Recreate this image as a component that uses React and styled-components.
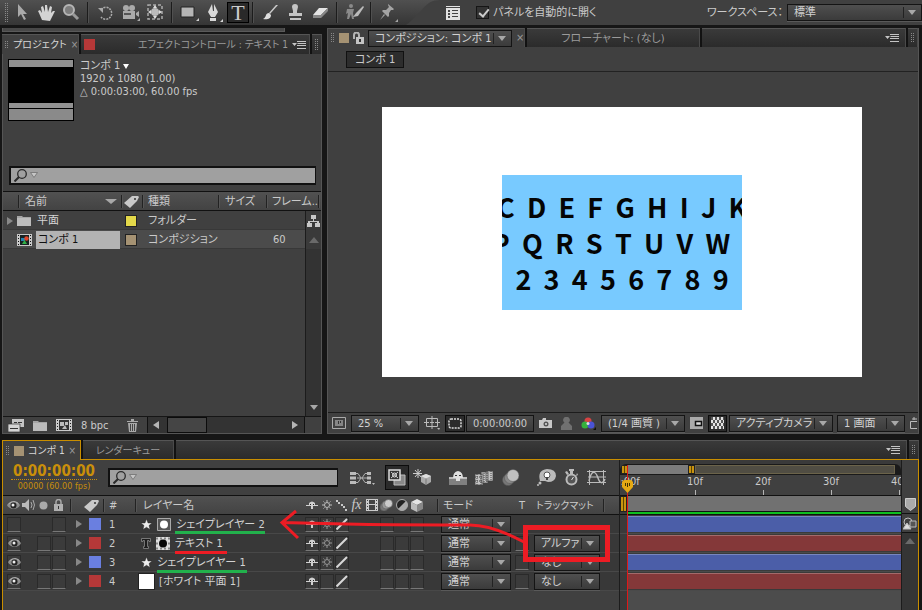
import React from 'react'
import styled, { createGlobalStyle } from 'styled-components'

const layers = [
	{ id: 1, name: 'シェイプレイヤー 2', color: '#6a7fe0', bar: '#4b5ea8', kind: 'star', mask: 'maskLight', visible: false, sun: true, matte: null, t: false },
	{ id: 2, name: 'テキスト 1', color: '#b53838', bar: '#843839', kind: 'type', mask: 'maskDark', visible: true, sun: true, matte: 'アルファ', t: true },
	{ id: 3, name: 'シェイプレイヤー 1', color: '#6a7fe0', bar: '#4b5ea8', kind: 'star', visible: true, sun: true, matte: 'なし', t: true },
	{ id: 4, name: '[ホワイト 平面 1]', color: '#b53838', bar: '#843839', kind: 'solid', visible: true, sun: false, matte: 'なし', t: true },
]

const glyphRows = [
	{ text: 'C D E F G H I J K', shift: 0 },
	{ text: 'P Q R S T U V W', shift: 22 },
	{ text: '2 3 4 5 6 7 8 9', shift: 0 },
]

// every drawing is [width, height, shapes]
const icons = {
	arrow: [12, 17, <path d="M2 0v13l3-3 3 6 2-1-3-5h4z" fill="#a9a9a9" />],
	hand: [17, 17, <path d="M4 16 1 9 0 7l2-1 2 3L3 3l2-1 2 6V1h2l1 7 2-6 2 1-1 6 2-2 2 0-3 6-2 4z" fill="#d4d4d4" />],
	zoom: [17, 17, <g fill="none"><circle cx="6" cy="6" r="5" fill="#7d7d7d" stroke="#b5b5b5" strokeWidth="2" /><path d="m10 10 5 5" stroke="#999" strokeWidth="3" /></g>],
	rotate: [16, 16, <g><path d="M3 4.500A6 6 0 1 1 3 12" fill="none" stroke="#aaa" strokeWidth="1.500" strokeDasharray="2 1" /><path d="M0 3h5v5z" fill="#aaa" /></g>],
	movie: [18, 17, <g fill="#aaa"><circle cx="4" cy="4" r="3" /><circle cx="10" cy="4" r="3" /><path d="M1 7h12v8H1zm13 2 3-2v6l-3-2zM15 17h3v-3z" /><path d="M2 9h7v2H2z" fill="#555" /></g>],
	behind: [17, 17, <g><path d="M1 1h14v14H1z" fill="none" stroke="#aaa" strokeWidth="1.500" strokeDasharray="3 2" /><circle cx="8" cy="8" r="4" fill="#bbb" /><path d="m8 1 2 3H6zm0 14 2-3H6zM1 8l3-2v4zm14 0-3-2v4z" fill="#ddd" /></g>],
	rect: [19, 17, <g><path d="M1 3h13v10H1z" fill="#b5b5b5" stroke="#222" /><path d="M19 17h-3l3-3z" fill="#ccc" /></g>],
	pen: [17, 18, <g fill="#d8d8d8"><path d="M6 0 2 8l3 5h4l3-5-4-8v7H7zM4 14h6v3H4z" /><path d="M17 18h-3l3-3z" /></g>],
	brush: [17, 16, <g><path d="M16 0 8 9 7 8 14 0z" fill="#ccc" /><path d="M7 8c-4 0-2 4-6 6 4 1 8 0 8-4z" fill="#ddd" /></g>],
	stamp: [15, 17, <path d="M7 0a3 3 0 0 1 3 3L9 7v2h5v3H1V9h4V7L4 3a3 3 0 0 1 3-3zM2 14h11v2H2z" fill="#c4c4c4" />],
	eraser: [17, 12, <g><path d="M7 1h9l-7 7H1z" fill="#e4e4e4" /><path d="M1 8h8v3H1zm8 0 7-7v3l-7 7z" fill="#888" /></g>],
	puppet: [18, 17, <g fill="#8a8a8a"><circle cx="5" cy="2" r="2" /><path d="M1 5h7l-1 4 1 6H6l-1-5-2 5H1l1-6-2 1z" /><path d="m17 2-7 7-3 4 5-1 6-9z" fill="#bbb" /></g>],
	pin: [18, 18, <g fill="#a4a4a4"><path d="m8 0 6 5-1 1-2 0-2 3 0 3-1 1-6-6 1-1 3 0 3-3-1-2zM4 10l1 1-5 5zM18 18h-3l3-3z" /></g>],
	panel: [14, 14, <g><path d="M0 0h14v14H0z" fill="#e2e2e2" /><path d="M2 4h2v2H2zm4 0h6v1H6zM2 7h2v2H2zm4 0h6v1H6zM2 10h2v2H2zm4 0h6v1H6zM0 1h14v1H0z" fill="#444" /></g>],
	menu: [14, 8, <path d="M0 2h5L2.500 5zM5 0h9v1H5zm0 2h9v1H6zm0 2h9v1H5zm0 3h9v1H5z" fill="#c4c4c4" />],
	lock: [11, 12, <g><path d="M1 7V3a2.500 2.500 0 0 1 5 0v3" fill="none" stroke="#b4b4b4" strokeWidth="2" /><path d="M3 5h8v7H3z" fill="#c4c4c4" /><path d="M6 7h2v3H6z" fill="#333" /></g>],
	padlock: [9, 12, <g><path d="M2 6V3a2.500 2.500 0 0 1 5 0v3" fill="none" stroke="#a8a8a8" strokeWidth="1.500" /><path d="M0 5h9v7H0z" fill="#b0b0b0" /><path d="M4 7h1v3H4z" fill="#333" /></g>],
	lens: [24, 13, <g><circle cx="8" cy="5" r="4.300" fill="none" stroke="#2a2a2a" strokeWidth="1.300" /><path d="m5 8-4.500 4.500" stroke="#2a2a2a" strokeWidth="2" /><path d="M16.500 3.500h7L20 8.500z" fill="#c6c6c6" stroke="#6e6e6e" strokeWidth=".8" /></g>],
	tag: [15, 13, <g><path d="M0 8 8 1l6 0 1 1-2 4-7 7z" fill="#c9c9c9" /><circle cx="11" cy="4" r="1" fill="#333" /></g>],
	folder: [14, 11, <g><path d="M0 1h5l1 1h8v9H0z" fill="#a5a5a5" /><path d="M0 3h14v8H0z" fill="#bcbcbc" /></g>],
	comp: [15, 12, <g><path d="M0 0h15v12H0z" fill="#c8c8c8" /><path d="M3 1h9v10H3z" fill="#172222" /><path d="M1 1h1v1H1zm0 3h1v1H1zm0 3h1v1H1zm0 3h1v1H1zm12-9h1v1h-1zm0 3h1v1h-1zm0 3h1v1h-1zm0 3h1v1h-1z" fill="#111" /><path d="M4 4h4v3H4z" fill="#2482b0" /><circle cx="9.500" cy="4.500" r="2.200" fill="#e0452a" /><path d="m5 10 2.500-4L10 10z" fill="#31b046" /></g>],
	compGrey: [16, 12, <g><path d="M0 0h16v12H0z" fill="#ccc" /><path d="M3 1h10v10H3z" fill="#333" /><path d="M1 1h1v1H1zm0 3h1v1H1zm0 3h1v1H1zm0 3h1v1H1zm13-9h1v1h-1zm0 3h1v1h-1zm0 3h1v1h-1zm0 3h1v1h-1z" fill="#222" /><path d="M4 3h4v4H4zm5 0h3v3H9zm-3 7 3-4 2 4z" fill="#bbb" /></g>],
	footage: [16, 13, <g fill="#c4c4c4"><path d="M4 0h12v8H4z" /><path d="M0 5h12v8H0z" fill="#d4d4d4" stroke="#333" strokeWidth=".7" /><path d="M6 3h3v1H6zm4 0h4v1h-4zM2 9h8v1H2z" fill="#333" /></g>],
	trash: [11, 13, <g><path d="M0 2h11v1H0zM4 0h3v2H4zM1 4h9l-1 9H2z" fill="#aaa" /><path d="M3.500 5v7m2-7v7m2-7v7" stroke="#444" /></g>],
	tree: [13, 12, <path d="M4 0h5v4H7v2h5v2h1v4H8V8h2V7H3v1h2v4H0V8h1V6h5V4H4z" fill="#c8c8c8" />],
	view: [14, 12, <g><path d="M.5.500h13v11H.5z" fill="none" stroke="#aaa" /><path d="M3 3h8v6H3z" fill="#858585" /><path d="M6 4h1v3H6zm2 0h1v2H8z" fill="#333" /></g>],
	safe: [16, 14, <g fill="none" stroke="#bbb"><path d="M2.500 2.500h11v8h-11zM8 0v5m0 3v5M0 6.500h5m6 0h5M8 5v3M6 6.500h4" /><path d="M13 12h3l-1 2z" fill="#bbb" stroke="none" /></g>],
	region: [14, 11, <rect x="1" y="1" width="12" height="9" rx="2" fill="none" stroke="#ddd" strokeWidth="1.500" strokeDasharray="2 1" />],
	photo: [13, 10, <g><path d="M0 2h3l1-2h3v2h6v8H0z" fill="#c8c8c8" /><circle cx="7" cy="6" r="2.500" fill="#555" /><circle cx="7" cy="6" r="1" fill="#ddd" /></g>],
	person: [11, 13, <path d="M5.500 0a3 3 0 0 1 2 5.500L11 9v4H0V9l3.500-3.500A3 3 0 0 1 5.500 0z" fill="#707070" />],
	rgb: [15, 13, <g><circle cx="7" cy="4" r="3.500" fill="#d84343" /><circle cx="4" cy="8" r="3.500" fill="#35b13c" /><circle cx="10" cy="8" r="3.500" fill="#4a53d6" /><circle cx="7" cy="6.500" r="1.500" fill="#ddd" /><path d="M15 13h-3l3-3z" fill="#111" /></g>],
	pixel: [13, 12, <g><path d="M0 0h13v12H0z" fill="#aaa" /><path d="M5.500 4.500h6v4h-6z" fill="#ddd" stroke="#111" strokeWidth="1.500" /></g>],
	checker: [13, 12, <g><path d="M0 0h13v12H0z" fill="#e4e4e4" /><path d="M0 1.500h13M0 7.500h13" stroke="#555" strokeWidth="3" strokeDasharray="2 2" /><path d="M2 4.500h11M2 10.500h11" stroke="#555" strokeWidth="3" strokeDasharray="2 2" /></g>],
	export: [8, 12, <g fill="none" stroke="#bbb"><path d="M1.500 4.500h7v7h-7zM5 0v3M3 2h6" /></g>],
	eye: [13, 9, <g><path d="M0 4.500C3 0 10 0 13 4.500 10 9 3 9 0 4.500z" fill="#8d8d8d" /><path d="M1 3.500C4-.5 10 0 12 3.500" fill="none" stroke="#ccc" /><circle cx="6.500" cy="4.500" r="3" fill="#222" /><circle cx="6" cy="4" r="1.500" fill="#eee" /></g>],
	sound: [14, 12, <g><path d="M0 4h3l4-4v12L3 8H0z" fill="#bbb" /><path d="M9 3q2 3 0 6m2-8q3 5 0 10" fill="none" stroke="#aaa" /></g>],
	solo: [9, 9, <circle cx="4.500" cy="4.500" r="4" fill="#aaa" />],
	shy: [12, 8, <g fill="#d0d0d0"><path d="M0 4h3v1H0zm9 0h3v1H9z" /><path d="M3 2q3-3 6 0v3H7v3H5V5H3z" /><path d="M4 3h1v1H4zm3 0h1v1H7z" fill="#222" /></g>],
	sun: [10, 10, <g fill="none" stroke="#c0c0c0"><circle cx="5" cy="5" r="2.500" /><path d="M5 0v2m0 6v2M0 5h2m6 0h2M1.500 1.500l1 1m5 5 1 1m0-7-1 1m-5 5-1 1" /></g>],
	quality: [11, 11, <path d="M0 0h2v2H0zm2 2h2v2H2zm3 2h2v2H5zm2 2h2v2H7zm2 3h2v2H9z" fill="#c8c8c8" />],
	slash: [12, 12, <path d="M.5 11.500 11 1" stroke="#d8d8d8" strokeWidth="2" />],
	film: [12, 12, <g><path d="M0 0h12v12H0z" fill="#ccc" /><path d="M3 1h6v4H3zm0 5h6v5H3zM1 1h1v1H1zm0 3h1v1H1zm0 3h1v1H1zm0 3h1v1H1zm9-9h1v1h-1zm0 3h1v1h-1zm0 3h1v1h-1zm0 3h1v1h-1z" fill="#444" /></g>],
	blur: [13, 12, <g stroke="#555" strokeWidth=".5"><circle cx="4" cy="8" r="4" fill="#777" /><circle cx="6" cy="6" r="4" fill="#999" /><circle cx="8.500" cy="4.500" r="4" fill="#ccc" /></g>],
	adjust: [12, 12, <g><circle cx="6" cy="6" r="5.500" fill="#222" stroke="#aaa" /><path d="M10 2A5.500 5.500 0 0 1 2 10z" fill="#aaa" /></g>],
	cube: [12, 13, <g><path d="m6 0 6 3-6 3-6-3z" fill="#e4e4e4" /><path d="m0 3 6 3v7l-6-3z" fill="#bbb" /><path d="m12 3-6 3v7l6-3z" fill="#888" /></g>],
	star: [11, 11, <path d="m5.500 0 1.500 4h4L8 6.500l1 4-3.500-2.300L2 10.500l1-4L0 4h4z" fill="#eee" stroke="#222" strokeWidth=".4" />],
	type: [10, 11, <path d="M.5.500h9v3H8V2.500H6.500v6h1v2h-5v-2h1v-6H2v1H.5z" fill="#1e1e1e" stroke="#8a8a8a" strokeWidth=".8" />],
	maskLight: [14, 13, <g><path d="M.5.500h13v12H.5z" fill="#555" stroke="#aaa" /><circle cx="7" cy="6.500" r="4" fill="#fff" /></g>],
	maskDark: [14, 13, <g><path d="M0 0h14v13H0z" fill="#ddd" /><path d="M0 1.500h14M0 6.500h14M0 11.500h14" stroke="#888" strokeWidth="2" strokeDasharray="2 2" /><circle cx="7" cy="6.500" r="4" fill="#080808" /></g>],
	flow: [25, 14, <g fill="none" stroke="#b0b0b0"><path d="M6 2.500h2l3 4.500-3 4.500H6M18 2.500h-3L12 7l3 4.500h3M7 7h10" /><path d="M0 1h6v3H0zm0 4.500h6v3H0zM0 10h6v3H0zM17 1h4v3h-4zm0 4.500h4v3h-4zm0 4.500h4v3h-4z" fill="#bbb" stroke="none" /><path d="M22 12h3l-1.500 2z" fill="#bbb" stroke="none" /></g>],
	live: [18, 17, <g><path d="M6 6h11v10H6z" fill="#888" stroke="#bbb" /><path d="M1 1h11v10H1z" fill="#333" stroke="#ddd" strokeWidth="1.500" /><path d="M3 3l7 6m0-6L3 9" stroke="#ccc" /><circle cx="6.500" cy="6" r="2" fill="none" stroke="#ddd" /></g>],
	draft: [19, 17, <g><path d="m13 5 5 2v6l-5 3-5-3V7z" fill="#aaa" /><path d="m8 7 5 2.500L18 7l-5-2z" fill="#ddd" /><path d="M13 9.500V16" stroke="#777" /><path d="M5 0v9M0 4.500h9M2 1l6 7m0-7L2 8" stroke="#ccc" /></g>],
	hide: [18, 14, <g><path d="M0 6h18v8H0z" fill="#808080" /><path d="M0 6h18v2H0z" fill="#bbb" /><path d="M4 7q0-6 5-7 5 1 5 7l-3 0v3H7V7z" fill="#e0e0e0" /><path d="M6 4h2v1H6zm4 0h2v1h-2z" fill="#333" /></g>],
	frames: [19, 15, <g fill="#c4c4c4" stroke="#444" strokeWidth=".7"><path d="M11 1h7v10h-7zM6 2h7v11H6zM0 4h8v11H0z" /><path d="M2 4v11m4-11v11M9 3v9m3-11v11m4-11v10M0 7h8m-8 4h8" strokeDasharray="1 1" strokeWidth="1" /></g>],
	blurBig: [18, 17, <g stroke="#555" strokeWidth=".5"><circle cx="6" cy="11" r="5.500" fill="#777" /><circle cx="8" cy="9" r="5.500" fill="#8a8a8a" /><circle cx="11" cy="6.500" r="6" fill="#c0c0c0" /></g>],
	brain: [19, 17, <g><path d="M3 12Q0 1 10 0q9 0 9 7-1 6-8 6l-3-1z" fill="#bbb" /><circle cx="10" cy="6" r="3" fill="#fff" stroke="#555" /><path d="M9 8h2v3H9z" fill="#444" /><circle cx="3" cy="14" r="1.500" fill="#bbb" /><circle cx="1" cy="16" r="1" fill="#bbb" /></g>],
	watch: [15, 17, <g><circle cx="7.500" cy="10.500" r="5" fill="#555" stroke="#bbb" strokeWidth="2" /><path d="M5 0h5v2H9v3H6V2H5zM1 3l2-1 2 3-2 1zM13 4l1 2-2 1z" fill="#bbb" /><path d="m7.500 11 2-3" stroke="#ddd" /></g>],
	graph: [20, 15, <g fill="none" stroke="#bbb"><path d="M0 1.500h19M0 12.500h19M2.500 0v15M16.500 0v15M1 7h18" /><path d="M2 11C5-2 9 2 11 8s5 6 7 1" strokeWidth="1.500" /></g>],
	marker: [11, 13, <path d="M.5.500h10v8l-5 4-5-4z" fill="#aaa" stroke="#ccc" />],
	corner: [14, 13, <g fill="none" stroke="#bbb"><circle cx="5" cy="5" r="4" /><path d="M7 4h6v6H7z" fill="#555" /><path d="m0 12 4-6 4 6z" fill="#ddd" /></g>],
}

const Icon = ({ name }) => {
	const [w, h, shapes] = icons[name]
	return <Svg width={w} height={h} viewBox={`0 0 ${w} ${h}`} aria-hidden="true">{shapes}</Svg>
}

const Dropdown = ({ label, value, width }) => (
	<SelectBox $width={width}>
		<select aria-label={label} defaultValue={value}>
			<option>{value}</option>
		</select>
		<Down />
	</SelectBox>
)

const tools = ['arrow', 'hand', 'zoom', null, 'rotate', 'movie', 'behind', null, 'rect', 'pen', 'text', null, 'brush', 'stamp', 'eraser', null, 'puppet', null, 'pin']

const Toolbar = () => (
	<Bar>
		<Tools>
			<Grip $h={20} />
			{tools.map((t, i) => {
				if (!t) return <ToolLine key={i} />
				if (t === 'text') return <Tool key={i} $on aria-label="text"><span>T</span></Tool>
				return <Tool key={i} aria-label={t}><Icon name={t} /></Tool>
			})}
		</Tools>
		<Options>
			<Icon name="panel" />
			<Check><input type="checkbox" defaultChecked />パネルを自動的に開く</Check>
		</Options>
		<Workspace>
			<span>ワークスペース：</span>
			<Dropdown label="ワークスペース" value="標準" width={135} />
		</Workspace>
	</Bar>
)

const Project = () => (
	<ProjectColumn>
		<ScrollStrip />
		<Tabs $h={20} $tight>
			<Tab $active $w={77}><Grip $h={8} />プロジェクト<Close>×</Close></Tab>
			<Tab $w={230} $grow>
				<Swatch $color="#b53838" $size={11} />
				<EffectName>エフェクトコントロール : テキスト 1</EffectName>
				<Icon name="menu" />
			</Tab>
			<Tab $w={10}><Grip $h={11} /></Tab>
		</Tabs>
		<ProjectBody>
			<Summary>
				<Thumb><i /></Thumb>
				<div>
					<p>コンポ 1 <Down $small $light /></p>
					<p>1920 x 1080 (1.00)</p>
					<p>△ 0:00:03:00, 60.00 fps</p>
				</div>
			</Summary>
			<SearchBox $m="0 5px 6px 6px"><Icon name="lens" /><input aria-label="プロジェクトを検索" /></SearchBox>
			<Assets>
				<thead>
					<AssetRow $head>
						<Th $pad={6}>名前<Down $wide /></Th>
						<Th $pad={2}><Icon name="tag" /></Th>
						<Th $pad={5}>種類</Th>
						<Th $pad={6}>サイズ</Th>
						<Th $pad={5}>フレーム..</Th>
						<Th $pad={0} />
					</AssetRow>
				</thead>
				<tbody>
					<AssetRow>
						<td><Right /><Icon name="folder" /><AssetName>平面</AssetName></td>
						<td><Swatch $color="#e3d84a" $size={10} $edge /></td>
						<td>フォルダー</td>
						<td />
						<td />
						<Side><Icon name="tree" /></Side>
					</AssetRow>
					<AssetRow $selected>
						<td><Right $hidden /><Icon name="comp" /><AssetName $selected>コンポ 1</AssetName></td>
						<td><Swatch $color="#a59273" $size={10} $edge /></td>
						<td>コンポジション</td>
						<td />
						<td>60</td>
						<Side><Up /></Side>
					</AssetRow>
				</tbody>
			</Assets>
			<Filler><Rail><Down /></Rail></Filler>
			<ProjectFoot>
				<Icon name="footage" />
				<Icon name="folder" />
				<Icon name="compGrey" />
				<span>8 bpc</span>
				<Icon name="trash" />
				<HScroll><Left /><b /><Right $light /></HScroll>
			</ProjectFoot>
		</ProjectBody>
	</ProjectColumn>
)

const Composition = () => (
	<CompColumn>
		<Tabs $h={19}>
			<Tab $active $w={197}>
				<Grip $h={10} />
				<Swatch $color="#a59273" $size={10} />
				<Icon name="lock" />
				<Dropdown label="コンポジション" value="コンポジション: コンポ 1" width={144} />
				<Close>×</Close>
			</Tab>
			<Tab $w={173} $center>フローチャート: (なし)</Tab>
			<Tab $w={206} $grow $end><Icon name="menu" /></Tab>
			<Tab $w={10}><Grip $h={10} /></Tab>
		</Tabs>
		<Crumbs><Crumb>コンポ 1</Crumb></Crumbs>
		<Stage>
			<Canvas>
				<Matte>
					{glyphRows.map(r => <Letters key={r.text} $shift={r.shift}>{r.text.split(' ').join('\u00a0\u00a0')}</Letters>)}
				</Matte>
			</Canvas>
		</Stage>
		<ViewFoot>
			<IconButton aria-label="view"><Icon name="view" /></IconButton>
			<Dropdown label="倍率" value="25 %" width={68} />
			<IconButton aria-label="safe"><Icon name="safe" /></IconButton>
			<IconButton $on aria-label="region"><Icon name="region" /></IconButton>
			<Time>0:00:00:00</Time>
			<IconButton aria-label="photo"><Icon name="photo" /></IconButton>
			<IconButton aria-label="person"><Icon name="person" /></IconButton>
			<IconButton aria-label="rgb"><Icon name="rgb" /></IconButton>
			<Dropdown label="解像度" value="(1/4 画質 )" width={84} />
			<IconButton aria-label="pixel"><Icon name="pixel" /></IconButton>
			<IconButton $on aria-label="checker"><Icon name="checker" /></IconButton>
			<FootGroup>
				<Dropdown label="カメラ" value="アクティブカメラ" width={104} />
				<Dropdown label="レイアウト" value="1 画面" width={68} />
				<Icon name="export" />
			</FootGroup>
		</ViewFoot>
	</CompColumn>
)

const Layer = ({ layer }) => (
	<LayerRow>
		<Box>{layer.visible && <Icon name="eye" />}</Box>
		<td />
		<Box $plain={!layer.visible} />
		<Box />
		<td><Twirl><Right /><Swatch $color={layer.color} $size={12} /></Twirl></td>
		<td><Num>{layer.id}</Num></td>
		<td>
			<NameCell $solid={layer.kind === 'solid'}>
				{layer.kind === 'solid' ? <Swatch $color="#fff" $size={15} $edge /> : <Icon name={layer.kind} />}
				{layer.mask && <Icon name={layer.mask} />}
				<LayerName>{layer.name}</LayerName>
			</NameCell>
		</td>
		<Box><Icon name="shy" /></Box>
		<Box $dim>{layer.sun && <Icon name="sun" />}</Box>
		<Box><Icon name="slash" /></Box>
		<td />
		<td />
		<Box />
		<Box $plain={!layer.visible} />
		<Box />
		<td />
		<ControlCell><Dropdown label="モード" value="通常" width={70} /></ControlCell>
		<Box $plain={!layer.t} />
		<ControlCell>{layer.matte && <Dropdown label="トラックマット" value={layer.matte} width={66} />}</ControlCell>
	</LayerRow>
)

const Timeline = () => (
	<TimePanel>
		<Tabs $h={20} $gold $tight>
			<Tab $active $gold $w={79}><Grip $h={10} /><Swatch $color="#a59273" $size={10} />コンポ 1<Close>×</Close></Tab>
			<Tab $w={91} $center>レンダーキュー</Tab>
			<Tab $w={736} $grow $end><Icon name="menu" /></Tab>
			<Tab $w={10}><Grip $h={10} /></Tab>
		</Tabs>
		<TimeBody>
			<LayerSide>
				<TimeHead>
					<Clock><strong>0:00:00:00</strong><small>00000 (60.00 fps)</small></Clock>
					<SearchBox $m="0 12px 0 0"><Icon name="lens" /><input aria-label="レイヤーを検索" /></SearchBox>
					<Icon name="flow" />
					<IconButton $on $big aria-label="live"><Icon name="live" /></IconButton>
					<HeadIcons>
						<Icon name="draft" />
						<i />
						<Icon name="hide" />
						<Icon name="frames" />
						<Icon name="blurBig" />
						<i />
						<Icon name="brain" />
						<Icon name="watch" />
						<Icon name="graph" />
					</HeadIcons>
				</TimeHead>
				<LayerTable>
					<thead>
						<LayerRow $head>
							<IconTh><Icon name="eye" /></IconTh>
							<IconTh><Icon name="sound" /></IconTh>
							<IconTh><Icon name="solo" /></IconTh>
							<IconTh><Icon name="padlock" /></IconTh>
							<Th $pad={13}><Icon name="tag" /></Th>
							<Th $pad={5}>#</Th>
							<Th $pad={7}>レイヤー名</Th>
							{['shy', 'sun', 'quality'].map(n => <IconTh key={n}><Icon name={n} /></IconTh>)}
							<IconTh><Fx>fx</Fx></IconTh>
							{['film', 'blur', 'adjust', 'cube'].map(n => <IconTh key={n}><Icon name={n} /></IconTh>)}
							<th />
							<Th $pad={5}>モード</Th>
							<IconTh>T</IconTh>
							<TightTh>トラックマット</TightTh>
							<Th $pad={0} />
						</LayerRow>
					</thead>
					<tbody>
						{layers.map(l => <Layer key={l.id} layer={l} />)}
					</tbody>
				</LayerTable>
			</LayerSide>
			<Tracks>
				<Ruler>
					<Nav><Handle /><b /><Handle /><i /></Nav>
					<Marks>
						{['0:00f', '10f', '20f', '30f', '40f'].map(m => <span key={m}>{m}</span>)}
					</Marks>
				</Ruler>
				<Work><Handle /><b /></Work>
				{layers.map(l => <Track key={l.id}><TrackBar $color={l.bar} /></Track>)}
				<Rest />
				<Playhead>
					<svg width="11" height="14" viewBox="0 0 11 14"><path d="M2 0h7l2 2v5l-5.500 6L0 7V2z" fill="#e5a913" /><path d="M3.500 3v3m2-3v4m2-4v3" stroke="#443300" /></svg>
				</Playhead>
			</Tracks>
			<TimeRail>
				<div><Icon name="marker" /></div>
				<div><Icon name="corner" /></div>
				<section><Up /></section>
			</TimeRail>
			<Notes width="620" height="150" viewBox="0 460 620 150" aria-hidden="true">
				<path d="M175 532.500h90M157 571.500h90" stroke="#22b14c" strokeWidth="3" />
				<path d="M175 552.500h52" stroke="#ed1c24" strokeWidth="3" />
				<path d="M525.500 527.500h82v32h-82z" stroke="#ed1c24" strokeWidth="5" />
				<path d="M282 522.500C330 524 380 525 470 525q22 0 54 17M296 511l-14 11.500L298 538" stroke="#ed1c24" strokeWidth="3" />
			</Notes>
		</TimeBody>
	</TimePanel>
)

const App = () => (
	<Page>
		<Global />
		<Toolbar />
		<Main>
			<Project />
			<Composition />
		</Main>
		<Timeline />
	</Page>
)

export default App

const Global = createGlobalStyle`
	* { box-sizing: border-box; }
	body {
		margin: 0;
		background: #161616;
		color: #cacaca;
		font-family: "DejaVu Sans Condensed", "Noto Sans CJK JP", sans-serif;
		font-size: 11px;
		line-height: 13px;
		font-feature-settings: "palt";
	}
	button, input, select { font: inherit; color: inherit; font-feature-settings: inherit; }
	p { margin: 0; }
	table, tbody, thead { display: block; }
	th, td { padding: 0; font-weight: normal; text-align: left; }
`
const Page = styled.div`
	min-height: 100vh;
	display: flex;
	flex-direction: column;
	overflow: hidden;
`
const Svg = styled.svg`
	display: block;
	flex: none;
`
const Main = styled.main`
	flex: 1;
	display: flex;
	gap: 5px;
	padding: 0 3px 0 2px;
	margin: 3px 0 6px;
`

/* small parts */
const Grip = styled.span`
	flex: none;
	width: 4px;
	height: ${p => p.$h}px;
	background: repeating-linear-gradient(90deg, #888 0 1px, transparent 1px 2px);
	mask: repeating-linear-gradient(#000 0 1px, transparent 1px 2px);
`
const Swatch = styled.span`
	flex: none;
	display: block;
	width: ${p => p.$size}px;
	height: ${p => p.$size}px;
	background: ${p => p.$color};
	outline: ${p => p.$edge ? '1px solid #222' : 'none'};
`
const Down = styled.i`
	flex: none;
	display: inline-block;
	border: ${p => p.$wide ? 6 : p.$small ? 3 : 4}px solid transparent;
	border-top: 5px solid ${p => p.$light ? '#fff' : '#a8a8a8'};
	border-bottom: 0;
`
const Up = styled.i`
	border: 5px solid transparent;
	border-bottom: 6px solid #6a6a6a;
	border-top: 0;
`
const Right = styled.i`
	flex: none;
	border: 4px solid transparent;
	border-left: 6px solid ${p => p.$light ? '#b5b5b5' : '#888'};
	border-right: 0;
	visibility: ${p => p.$hidden ? 'hidden' : 'visible'};
`
const Left = styled.i`
	border: 4px solid transparent;
	border-right: 6px solid #b5b5b5;
	border-left: 0;
`
const SelectBox = styled.span`
	position: relative;
	flex: none;
	display: block;
	width: ${p => p.$width}px;
	height: 17px;
	border: 1px solid #141414;
	box-shadow: 0 1px 0 #595959;
	background: linear-gradient(#4f4f4f, #3b3b3b);
	select {
		display: block;
		width: 100%;
		height: 15px;
		padding: 0 18px 0 6px;
		border: 0;
		background: none;
		appearance: none;
		color: #d2d2d2;
		line-height: 15px;
	}
	&::after {
		content: '';
		position: absolute;
		right: 17px;
		top: 2px;
		bottom: 2px;
		border-left: 1px solid #222;
	}
	${Down} {
		position: absolute;
		right: 5px;
		top: 5px;
		pointer-events: none;
	}
`
const IconButton = styled.button`
	flex: none;
	display: flex;
	align-items: center;
	justify-content: center;
	padding: 0 ${p => p.$on ? 2 : 3}px;
	height: ${p => p.$big ? 25 : 17}px;
	border: 1px solid ${p => p.$on ? '#0c0c0c' : 'transparent'};
	background: ${p => p.$on ? '#2b2b2b' : 'none'};
`
const SearchBox = styled.label`
	display: flex;
	align-items: center;
	height: 19px;
	margin: ${p => p.$m};
	padding: 0 3px;
	border: 2px solid #111;
	border-right-width: 1px;
	background: #a0a0a0;
	input {
		flex: 1;
		min-width: 0;
		height: 15px;
		border: 0;
		padding: 0 4px;
		background: none;
		color: #111;
		outline: none;
	}
`

/* tabs */
const Tabs = styled.div`
	flex: none;
	display: flex;
	gap: 2px;
	height: ${p => p.$h}px;
	background: #121212;
	border-bottom: ${p => p.$gold ? '1px solid #c98e00' : '0'};
	font-size: ${p => p.$tight ? 10 : 11}px;
`
const Close = styled.button`
	border: 0;
	padding: 0;
	background: none;
	color: #999;
	line-height: 12px;
`
const Tab = styled.div`
	display: flex;
	align-items: center;
	justify-content: ${p => p.$center ? 'center' : p.$end ? 'flex-end' : 'flex-start'};
	gap: 4px;
	flex: ${p => p.$grow ? '1 1 0' : 'none'};
	width: ${p => p.$w}px;
	min-width: 0;
	overflow: hidden;
	white-space: nowrap;
	padding: 0 3px;
	padding-right: ${p => p.$end ? 6 : 3}px;
	border-top: 1px solid #555;
	border-right: 1px solid #4a4a4a;
	background: ${p => p.$active ? '#404040' : 'linear-gradient(#3a3a3a, #2b2b2b)'};
	color: ${p => p.$active ? '#d6d6d6' : '#9a9a9a'};
	${p => p.$gold && 'border: 1px solid #c98e00; border-bottom: 0; height: 20px; background: #404040;'}
`

/* toolbar */
const Bar = styled.header`
	flex: none;
	display: flex;
	align-items: center;
	height: 25px;
	background: #404040;
	overflow: hidden;
`
const Tools = styled.div`
	display: flex;
	align-items: center;
	height: 25px;
	width: 440px;
	padding-left: 5px;
	background: linear-gradient(#505050, #353535);
	clip-path: path('M0 0H440C424 0 422 14 406 25H0Z');
`
const Tool = styled.button`
	flex: none;
	display: flex;
	align-items: center;
	justify-content: center;
	width: ${p => p.$on ? 22 : 25}px;
	height: 21px;
	padding: 0;
	border: ${p => p.$on ? '1px solid #000' : '0'};
	background: ${p => p.$on ? '#292929' : 'none'};
	font: 22px/20px "Liberation Serif", serif;
	color: #ccc;
`
const ToolLine = styled.i`
	flex: none;
	width: 2px;
	height: 21px;
	margin: 0 4px 0 3px;
	border-left: 1px solid #1c1c1c;
	border-right: 1px solid #505050;
`
const Options = styled.div`
	display: flex;
	align-items: center;
	gap: 16px;
	padding-left: 6px;
`
const Check = styled.label`
	display: flex;
	align-items: center;
	gap: 4px;
	input {
		appearance: none;
		width: 13px;
		height: 13px;
		margin: 0;
		border: 1px solid #161616;
		background: #333;
	}
	input:checked::before {
		content: '';
		display: block;
		width: 4px;
		height: 8px;
		margin: 0 0 0 4px;
		border: solid #ccc;
		border-width: 0 2px 2px 0;
		transform: rotate(40deg);
	}
`
const Workspace = styled.div`
	display: flex;
	align-items: center;
	gap: 4px;
	margin-left: auto;
`

/* project panel */
const ProjectColumn = styled.section`
	flex: 0 1 320px;
	min-width: 0;
	display: flex;
	flex-direction: column;
`
const ScrollStrip = styled.div`
	flex: none;
	width: 283px;
	height: 4px;
	margin-bottom: 2px;
	background: #484848;
	border: 1px solid #5a5a5a;
	border-top: 0;
`
const EffectName = styled.span`
	flex: 1;
	text-align: right;
	overflow: hidden;
`
const ProjectBody = styled.div`
	flex: 1;
	display: flex;
	flex-direction: column;
	background: #404040;
	border: 1px solid #555;
	border-top: 0;
`
const Summary = styled.div`
	display: flex;
	gap: 6px;
	height: 112px;
	padding: 5px;
`
const Thumb = styled.div`
	width: 66px;
	height: 62px;
	padding: 7px 0 17px;
	border: 1px solid #000;
	background: linear-gradient(#919191 48px, #000 48px 49px, #8a8a8a 49px);
	i {
		display: block;
		height: 36px;
		background: #000;
	}
`
const Th = styled.th`
	display: flex;
	align-items: center;
	justify-content: space-between;
	height: 13px;
	padding-left: ${p => p.$pad}px !important;
	border-left: 1px solid #222;
	box-shadow: inset 1px 0 0 #555;
	white-space: nowrap;
`
const Assets = styled.table`
	flex: none;
	border-top: 1px solid #111;
`
const AssetRow = styled.tr`
	display: grid;
	grid-template-columns: 103px 21px 76px 48px 1fr 4px;
	align-items: center;
	height: 19px;
	padding-left: ${p => p.$head ? 15 : 0}px;
	background: ${p => p.$head ? 'linear-gradient(#515151, #434343)' : p.$selected ? '#4b4b4b' : '#404040'};
	border-bottom: 1px solid ${p => p.$head ? '#111' : '#383838'};
	${Down} { margin-right: 4px; }
	td {
		display: flex;
		align-items: center;
	}
	${p => !p.$head && `
		grid-template-columns: 117px 22px 76px 48px 1fr 16px;
		td:first-child { gap: 4px; padding-left: 4px; }
		td:nth-child(2) { padding-left: 6px; }
		td:nth-child(3) { padding-left: 6px; }
		td:nth-child(5) { padding-left: 7px; }
	`}
`
const AssetName = styled.span`
	flex: 1;
	height: 18px;
	line-height: 18px;
	padding-left: 2px;
	background: ${p => p.$selected ? '#b3b3b3' : 'none'};
	color: ${p => p.$selected ? '#111' : '#d6d6d6'};
`
const Side = styled.td`
	height: 19px;
	justify-content: center;
	border-left: 1px solid #1c1c1c;
	background: #3a3a3a;
`
const Filler = styled.div`
	flex: 1;
	display: flex;
	justify-content: flex-end;
`
const Rail = styled.div`
	width: 16px;
	display: flex;
	align-items: flex-end;
	justify-content: center;
	padding-bottom: 6px;
	border-left: 1px solid #1c1c1c;
	background: #333;
`
const ProjectFoot = styled.div`
	flex: none;
	display: flex;
	align-items: center;
	gap: 9px;
	height: 17px;
	padding-left: 5px;
	border-top: 1px solid #161616;
	span { padding-right: 10px; }
`
const HScroll = styled.div`
	flex: 1;
	display: flex;
	align-items: center;
	justify-content: space-between;
	height: 16px;
	margin-right: 16px;
	padding: 0 6px 0 5px;
	background: #333;
	border: 1px solid #111;
	border-width: 0 1px;
	b {
		width: 40px;
		height: 16px;
		margin: 0 auto 0 8px;
		border: 1px solid #0c0c0c;
		background: #454545;
	}
`

/* composition panel */
const CompColumn = styled.section`
	flex: 1;
	min-width: 0;
	display: flex;
	flex-direction: column;
	background: #404040;
	border: 1px solid #555;
	border-width: 0 1px;
`
const Crumbs = styled.nav`
	flex: none;
	height: 25px;
	padding: 4px 18px;
	border-bottom: 1px solid #222;
`
const Crumb = styled.button`
	display: block;
	height: 17px;
	padding: 0 8px;
	border: 1px solid #111;
	background: #2d2d2d;
	line-height: 13px;
`
const Stage = styled.div`
	flex: 1;
	display: flex;
	align-items: center;
	justify-content: center;
	padding: 0 8px 0 6px;
`
const Canvas = styled.div`
	flex: 0 1 480px;
	aspect-ratio: 16 / 9;
	display: flex;
	align-items: center;
	justify-content: center;
	background: #fff;
`
const Matte = styled.div`
	width: 50%;
	height: 50%;
	padding: 14px 0;
	overflow: hidden;
	background: #78caff;
`
const Letters = styled.div`
	display: flex;
	justify-content: center;
	padding-right: ${p => p.$shift}px;
	color: #050505;
	font: 700 27px/36px "Noto Sans CJK JP", sans-serif;
	font-feature-settings: normal;
	white-space: nowrap;
`
const ViewFoot = styled.footer`
	flex: none;
	display: flex;
	align-items: center;
	gap: 1px;
	height: 22px;
	border-top: 1px solid #1c1c1c;
	border-bottom: 1px solid #555;
	overflow: hidden;
`
const FootGroup = styled.div`
	display: flex;
	align-items: center;
	gap: 4px;
	padding-left: 1px;
`
const Time = styled.button`
	flex: none;
	width: 68px;
	height: 17px;
	padding: 0;
	border: 1px solid #141414;
	background: linear-gradient(#4c4c4c, #3b3b3b);
	line-height: 15px;
`

/* timeline */
const TimePanel = styled.section`
	flex: none;
	display: flex;
	flex-direction: column;
	margin: 0 3px 0 2px;
`
const TimeBody = styled.div`
	position: relative;
	display: flex;
	min-height: 150px;
	background: #404040;
	border: 1px solid #c98e00;
	border-width: 0 1px;
`
const LayerSide = styled.div`
	flex: none;
	width: 616px;
`
const TimeHead = styled.div`
	display: flex;
	align-items: center;
	height: 35px;
	padding: 0 12px 0 8px;
	${SearchBox} { flex: 1; }
	> ${IconButton} { margin: 0 4px 0 10px; }
`
const HeadIcons = styled.div`
	display: flex;
	align-items: center;
	gap: 8px;
	i { width: 1px; }
`
const Clock = styled.div`
	width: 86px;
	margin-right: 11px;
	text-align: center;
	color: #c98f0a;
	strong {
		display: block;
		font-size: 15px;
		line-height: 16px;
		border-bottom: 1px dotted #c98f0a;
	}
	small {
		display: block;
		font-size: 9px;
		line-height: 12px;
	}
`
const LayerTable = styled.table`
	border-top: 1px solid #111;
`
const LayerRow = styled.tr`
	display: grid;
	grid-template-columns: repeat(4, 15px) 37px 32px 169px repeat(8, 15px) 13px 77px 16px 73px 1fr;
	align-items: center;
	height: 19px;
	padding-left: 3px;
	background: ${p => p.$head ? 'linear-gradient(#515151, #434343)' : '#383838'};
	border-bottom: 1px solid ${p => p.$head ? '#111' : '#484848'};
	th:nth-child(5) { justify-content: flex-start; margin-left: 4px; }
`
const IconTh = styled.th`
	display: flex;
	justify-content: center;
`
const TightTh = styled(Th)`
	padding-left: 6px !important;
	border: 0;
	box-shadow: none;
	font-size: 10px;
`
const Fx = styled.em`
	font: italic 14px/12px "Liberation Serif", serif;
`
const Box = styled.td`
	display: flex;
	align-items: center;
	justify-content: center;
	width: 14px;
	height: 15px;
	margin-left: 1px;
	border: 1px solid #2a2a2a;
	border-bottom-color: #777;
	background: #3b3b3b;
	visibility: ${p => p.$plain ? 'hidden' : 'visible'};
	${Svg} { opacity: ${p => p.$dim ? 0.7 : 1}; }
`
const Twirl = styled.div`
	display: flex;
	align-items: center;
	gap: 7px;
	padding-left: 10px;
`
const Num = styled.span`
	padding-left: 6px;
`
const NameCell = styled.div`
	display: flex;
	align-items: center;
	gap: 5px;
	padding-left: ${p => p.$solid ? 4 : 6}px;
	white-space: nowrap;
`
const LayerName = styled.span`
	color: #d2d2d2;
`
const ControlCell = styled.td`
	padding-left: 4px !important;
`
const Tracks = styled.div`
	position: relative;
	flex: 1;
	min-width: 0;
	display: flex;
	flex-direction: column;
	overflow: hidden;
	border-left: 1px solid #1c1c1c;
	border-right: 1px solid #1c1c1c;
	background: #3a3a3a;
`
const Ruler = styled.div`
	flex: none;
	height: 31px;
	margin-top: 4px;
	background: #404040;
	border-radius: 6px 6px 0 0;
	overflow: hidden;
`
const Handle = styled.span`
	flex: none;
	width: 7px;
	background: repeating-linear-gradient(90deg, #c99410 0 2px, #5c4300 2px 3px);
	border: 1px solid #222;
`
const Nav = styled.div`
	display: flex;
	height: 11px;
	border: 1px solid #1a1a1a;
	border-right-width: 6px;
	b { width: 60px; background: #7c7c7c; }
	i { flex: 1; background: #504d43; border: 1px solid #6b634a; }
`
const Marks = styled.div`
	display: flex;
	margin-left: -27px;
	span {
		flex: none;
		width: 68px;
		height: 20px;
		text-align: center;
		background: linear-gradient(#b5b5b5, #b5b5b5) 34px 100% / 1px 5px no-repeat;
	}
`
const Work = styled.div`
	flex: none;
	display: flex;
	height: 20px;
	border-top: 1px solid #111;
	border-bottom: 1px solid #111;
	b {
		flex: 1;
		background: linear-gradient(#717171 15px, #111 15px 16px, #0fbe1f 16px);
	}
	${Handle} { height: 16px; }
`
const Track = styled.div`
	flex: none;
	height: 19px;
	padding: 1px 0 1px 7px;
	border-bottom: 1px solid #4a4a4a;
`
const TrackBar = styled.div`
	height: 16px;
	background: ${p => p.$color};
	box-shadow: inset 0 1px 0 rgba(255, 255, 255, 0.25);
`
const Rest = styled.div`
	flex: 1;
	margin-left: 7px;
	background: #4c4c4c;
`
const Playhead = styled.div`
	position: absolute;
	left: 7px;
	top: 5px;
	bottom: 0;
	border-left: 1px solid #e01818;
	svg {
		position: absolute;
		left: -6px;
		top: 15px;
	}
`
const TimeRail = styled.div`
	width: 16px;
	padding-top: 35px;
	display: flex;
	flex-direction: column;
	div {
		display: flex;
		align-items: center;
		justify-content: center;
		height: 19px;
		border-bottom: 1px solid #111;
	}
	section {
		flex: 1;
		display: flex;
		justify-content: center;
		align-items: flex-start;
		padding-top: 5px;
		background: #353535;
	}
`
const Notes = styled.svg`
	position: absolute;
	left: -3px;
	top: 0;
	fill: none;
	pointer-events: none;
`
